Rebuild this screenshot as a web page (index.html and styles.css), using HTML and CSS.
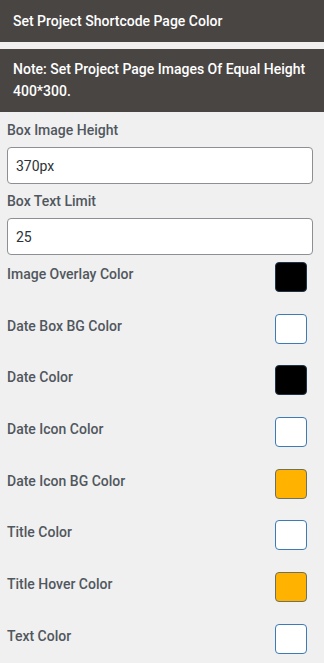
FILE: index.html
```html
<!DOCTYPE html>
<html lang="en">
<head>
  <meta charset="UTF-8" />
  <meta name="viewport" content="width=device-width, initial-scale=1.0"/>
  <title>Project Shortcode Settings</title>
  <link rel="stylesheet" href="styles.css">
</head>
<body>
  <div class="bar">Set Project Shortcode Page Color</div>
  <div class="bar note">Note: Set Project Page Images Of Equal Height 400*300.</div>

  <div class="settings">
    <label class="label" for="boxHeight">Box Image Height</label>
    <input class="field" id="boxHeight" type="text" value="370px">

    <label class="label" for="textLimit">Box Text Limit</label>
    <input class="field" id="textLimit" type="text" value="25">

    <div class="color-row">
      <span class="label">Image Overlay Color</span>
      <span class="swatch black"></span>
    </div>
    <div class="color-row">
      <span class="label">Date Box BG Color</span>
      <span class="swatch white"></span>
    </div>
    <div class="color-row">
      <span class="label">Date Color</span>
      <span class="swatch black"></span>
    </div>
    <div class="color-row">
      <span class="label">Date Icon Color</span>
      <span class="swatch white"></span>
    </div>
    <div class="color-row">
      <span class="label">Date Icon BG Color</span>
      <span class="swatch amber"></span>
    </div>
    <div class="color-row">
      <span class="label">Title Color</span>
      <span class="swatch white"></span>
    </div>
    <div class="color-row">
      <span class="label">Title Hover Color</span>
      <span class="swatch amber"></span>
    </div>
    <div class="color-row">
      <span class="label">Text Color</span>
      <span class="swatch white"></span>
    </div>
  </div>
</body>
</html>
```

FILE: styles.css
```css
body {
  margin: 0;
  background: #f0f0f0;
  font-family: Roboto, "Liberation Sans", sans-serif;
}
.bar {
  background-color: #494543;
  color: #fff;
  font-size: 14px;
  font-weight: 500;
  line-height: 22px;
  padding: 10px 13px;
  margin-bottom: 7px;
}
.note {
  padding: 9px 13px 10px;
  margin-bottom: 0;
}
.settings {
  padding: 8px 11px 0 7px;
}
.label {
  display: block;
  font-size: 14px;
  font-weight: 500;
  color: #50575e;
  line-height: 20px;
}
.field {
  display: block;
  box-sizing: border-box;
  width: 100%;
  height: 37px;
  margin: 7px 0;
  padding: 0 8px;
  border: 1px solid #8c8f94;
  border-radius: 4px;
  background: #fff;
  font-family: Roboto, "Liberation Sans", sans-serif;
  font-size: 14px;
  color: #2c3338;
}
.color-row {
  display: flex;
  justify-content: space-between;
  align-items: flex-start;
  height: 51.7px;
}
.color-row .label {
  margin-top: 2px;
}
.swatch {
  box-sizing: border-box;
  width: 32px;
  height: 30px;
  margin-right: 6px;
  border: 1px solid #3b7bb6;
  border-radius: 4px;
}
.black {
  background: #000;
  border-color: #1f3349;
}
.white {
  background: #fff;
}
.amber {
  background: #ffb300;
  border-color: #6d7160;
}
```
